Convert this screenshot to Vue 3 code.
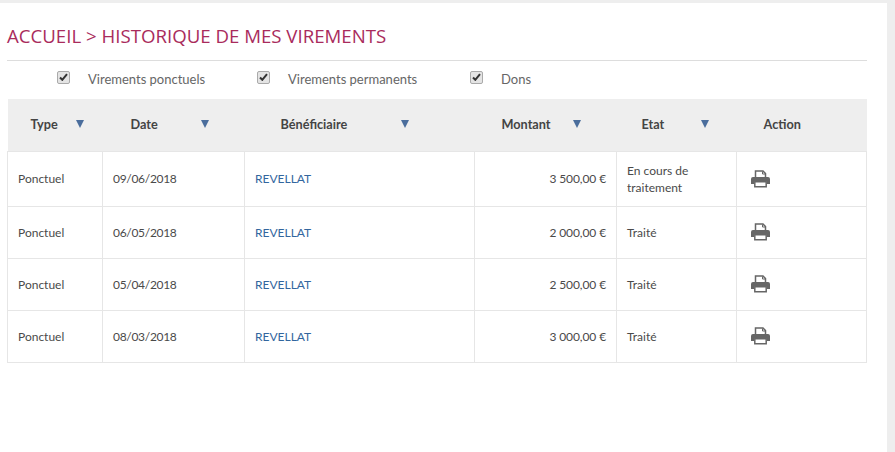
<template>
  <div class="page">
    <div class="panel">
      <h1 class="title">ACCUEIL &gt; HISTORIQUE DE MES VIREMENTS</h1>
      <div class="filters">
        <label v-for="f in filters" :key="f.label" class="filter" :style="{ width: f.width + 'px' }">
          <span class="box">
            <svg width="9" height="8" viewBox="0 0 9 8"><path d="M1 4.500 3.300 6.800 8 1.200" fill="none" stroke="#333" stroke-width="2" /></svg>
          </span>
          <span>{{ f.label }}</span>
        </label>
      </div>
      <table class="grid">
        <colgroup>
          <col v-for="w in widths" :key="w" :style="{ width: w + 'px' }" />
        </colgroup>
        <thead>
          <tr>
            <th v-for="c in columns" :key="c.label">
              <div class="head" :style="{ paddingLeft: c.left + 'px', gap: c.gap + 'px' }">
                <span>{{ c.label }}</span>
                <i v-if="c.sort" class="arrow"></i>
              </div>
            </th>
          </tr>
        </thead>
        <tbody>
          <tr v-for="(r, i) in rows" :key="r.date" :class="'row' + i">
            <td>Ponctuel</td>
            <td class="date">{{ r.date }}</td>
            <td class="name"><a href="#" @click.prevent>REVELLAT</a></td>
            <td class="amount">{{ r.amount }}</td>
            <td class="state">{{ r.state }}</td>
            <td class="action">
              <svg width="19" height="18" viewBox="0 0 19 18">
                <path d="M4.500 8V1h7.500l2.500 2.500V8" fill="#fff" stroke="#666" stroke-width="1.500" />
                <path d="M11.500 1.500v2.500h3" fill="none" stroke="#666" />
                <path d="M2 7h15a2 2 0 0 1 2 2v5h-3v-2.500H3V14H0V9a2 2 0 0 1 2-2z" fill="#666" />
                <path d="M3.800 11.800h11.400v5H3.800z" fill="#fff" stroke="#666" stroke-width="1.500" />
              </svg>
            </td>
          </tr>
        </tbody>
      </table>
    </div>
  </div>
</template>

<script setup>
const filters = [
  { label: 'Virements ponctuels', width: 200 },
  { label: 'Virements permanents', width: 213 },
  { label: 'Dons', width: 100 },
]
const widths = [95, 142, 230, 142, 120, 130]
const columns = [
  { label: 'Type', left: 23, gap: 18, sort: true },
  { label: 'Date', left: 28, gap: 43, sort: true },
  { label: 'Bénéficiaire', left: 36, gap: 54, sort: true },
  { label: 'Montant', left: 27, gap: 22, sort: true },
  { label: 'Etat', left: 25, gap: 37, sort: true },
  { label: 'Action', left: 27, gap: 0, sort: false },
]
const rows = [
  { date: '09/06/2018', amount: '3 500,00 €', state: 'En cours de traitement' },
  { date: '06/05/2018', amount: '2 000,00 €', state: 'Traité' },
  { date: '05/04/2018', amount: '2 500,00 €', state: 'Traité' },
  { date: '08/03/2018', amount: '3 000,00 €', state: 'Traité' },
]
</script>

<style>
html, body { margin: 0; background: #eee; }
</style>

<style scoped>
.page { height: 452px; padding-top: 3px; box-sizing: border-box; overflow: hidden; font-family: Lato, "Open Sans", sans-serif; }
.panel { width: 860px; height: 449px; padding: 0 20px 0 7px; background: #fff; }
.title { margin: 0; height: 58px; padding-top: 22px; box-sizing: border-box; border-bottom: 1px solid #ddd; font-family: "Open Sans", sans-serif; font-size: 18.650px; line-height: 22px; font-weight: 400; color: #a92b5c; white-space: nowrap; }
.filters { display: flex; height: 38px; padding-bottom: 3px; box-sizing: border-box; padding-left: 50px; align-items: center; }
.filter { display: flex; align-items: center; color: #666; font-size: 13px; }
.box { display: flex; align-items: center; justify-content: center; width: 11px; height: 11px; margin: 0 18px 3px 0; border: 1px solid #aaa; border-radius: 2px; background: #e4e4e4; }
.grid { width: 859px; border-collapse: collapse; table-layout: fixed; font-size: 12px; color: #4a4a4a; }
th { height: 52px; padding: 0 0 2px; box-sizing: border-box; background: #eee; font-size: 12.700px; font-weight: 700; color: #444; text-align: left; }
.head { display: flex; align-items: center; }
.arrow { width: 0; height: 0; border-left: 4.500px solid transparent; border-right: 4.500px solid transparent; border-top: 8px solid #4a6d9c; }
td { padding: 0 10px; border: 1px solid #e6e6e6; line-height: 17px; }
tbody tr { height: 52px; }
tbody tr.row0 { height: 55px; }
.date { padding-left: 10px; letter-spacing: -0.300px; }
.name a { color: #32669e; text-decoration: none; }
.amount { text-align: right; letter-spacing: -0.100px; }
.action svg { display: block; margin-left: 4px; }
</style>
